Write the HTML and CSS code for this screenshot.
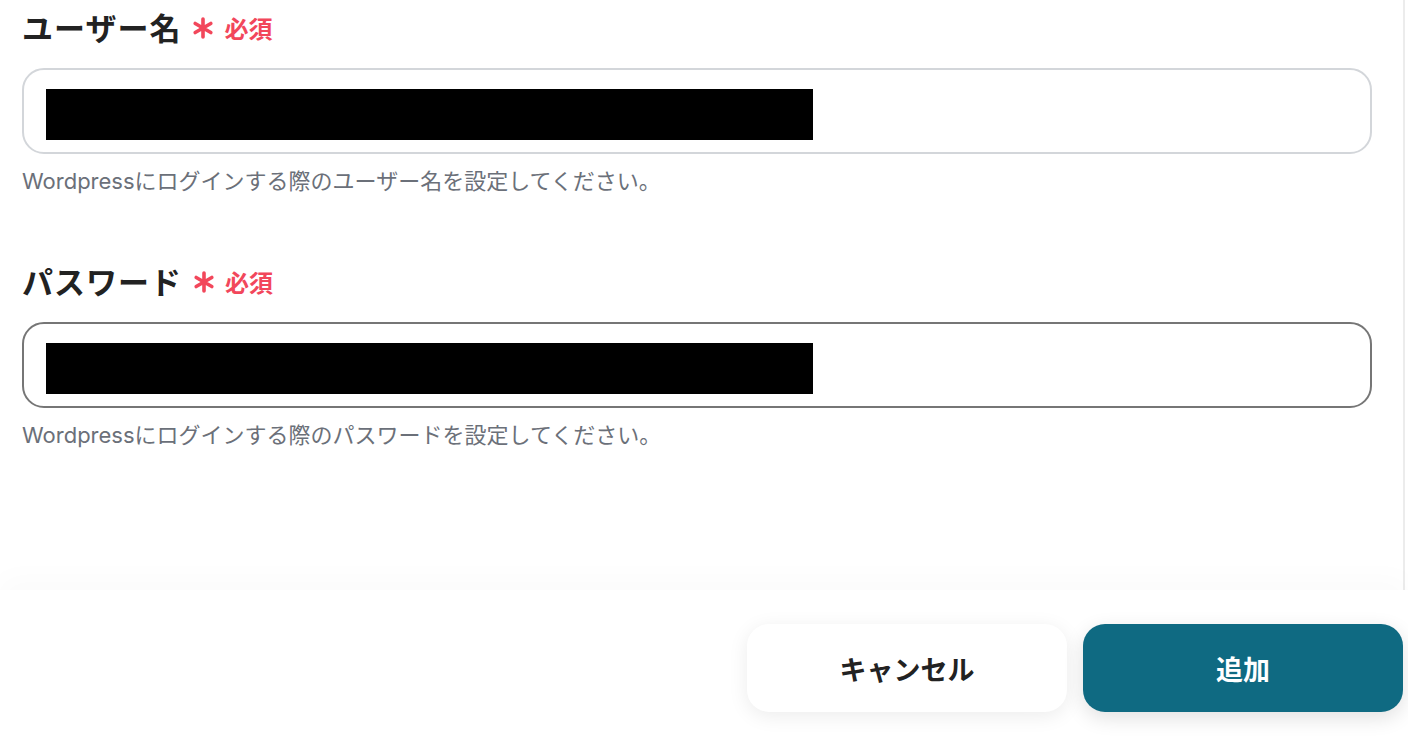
FILE: index.html
```html
<!DOCTYPE html>
<html lang="ja">
<head>
<meta charset="utf-8">
<title>WordPress</title>
<link rel="stylesheet" href="styles.css">
</head>
<body>
<div class="page">
  <main class="main">
    <div class="field">
      <div class="label"><span class="label-text">ユーザー名</span><svg class="req-mark" viewBox="0 0 22 22" width="22" height="22" aria-hidden="true"><path d="M11 2V20M3.2 6.5L18.8 15.5M3.2 15.5L18.8 6.5" stroke="#f2475b" stroke-width="3.6" stroke-linecap="round" fill="none"/></svg><span class="req-text">必須</span></div>
      <div class="input"><div class="mask"></div></div>
      <div class="help">Wordpressにログインする際のユーザー名を設定してください。</div>
    </div>
    <div class="field field-second">
      <div class="label"><span class="label-text">パスワード</span><svg class="req-mark" viewBox="0 0 22 22" width="22" height="22" aria-hidden="true"><path d="M11 2V20M3.2 6.5L18.8 15.5M3.2 15.5L18.8 6.5" stroke="#f2475b" stroke-width="3.6" stroke-linecap="round" fill="none"/></svg><span class="req-text">必須</span></div>
      <div class="input input-focus"><div class="mask"></div></div>
      <div class="help">Wordpressにログインする際のパスワードを設定してください。</div>
    </div>
  </main>
  <footer class="footer">
    <button class="btn btn-cancel">キャンセル</button>
    <button class="btn btn-primary">追加</button>
  </footer>
</div>
</body>
</html>
```
FILE: styles.css
```css
html, body {
  margin: 0;
  padding: 0;
  background: #ffffff;
}
body {
  font-family: "Noto Sans CJK JP", "Noto Sans", sans-serif;
  color: #222222;
}
.page {
  width: 1408px;
  height: 736px;
  display: flex;
  flex-direction: column;
  overflow: hidden;
}
.main {
  width: 1405px;
  height: 590px;
  box-sizing: border-box;
  border-right: 2px solid #ececec;
  padding: 6px 0 0 22px;
}
.field {
  width: 1350px;
}
.field-second {
  margin-top: 64px;
}
.label {
  display: flex;
  align-items: center;
  height: 42px;
  line-height: 42px;
}
.label-text {
  font-size: 31px;
  font-weight: 700;
  color: #222222;
  letter-spacing: 1px;
}
.req-mark {
  display: block;
  margin-left: 11px;
  flex-shrink: 0;
  position: relative;
  top: 1px;
}
.req-text {
  font-size: 24px;
  font-weight: 600;
  color: #f2475b;
  margin-left: 10px;
  position: relative;
  top: 1px;
}
.input {
  margin-top: 20px;
  height: 86px;
  box-sizing: border-box;
  border: 2px solid #d3d6da;
  border-radius: 22px;
  padding: 19px 0 0 22px;
  background: #ffffff;
}
.input-focus {
  border-color: #767676;
}
.mask {
  width: 767px;
  height: 51px;
  background: #000000;
}
.help {
  margin-top: 12px;
  font-family: "Inter", "Noto Sans CJK JP", sans-serif;
  font-size: 22px;
  line-height: 30px;
  color: #6b7079;
}
.footer {
  flex: 1;
  display: flex;
  justify-content: flex-end;
  align-items: flex-start;
  gap: 16px;
  padding: 34px 5px 0 0;
  background: #ffffff;
  box-shadow: 0 -12px 28px rgba(0, 0, 0, 0.02);
  position: relative;
}
.btn {
  width: 320px;
  height: 88px;
  border: none;
  border-radius: 22px;
  font-family: "Noto Sans CJK JP", "Noto Sans", sans-serif;
  font-size: 27px;
  font-weight: 700;
  cursor: pointer;
}
.btn-cancel {
  background: #ffffff;
  color: #222222;
  box-shadow: 0 4px 20px rgba(0, 0, 0, 0.08);
}
.btn-primary {
  background: #0f6a82;
  color: #ffffff;
  box-shadow: 0 6px 20px rgba(0, 0, 0, 0.12);
}
```
